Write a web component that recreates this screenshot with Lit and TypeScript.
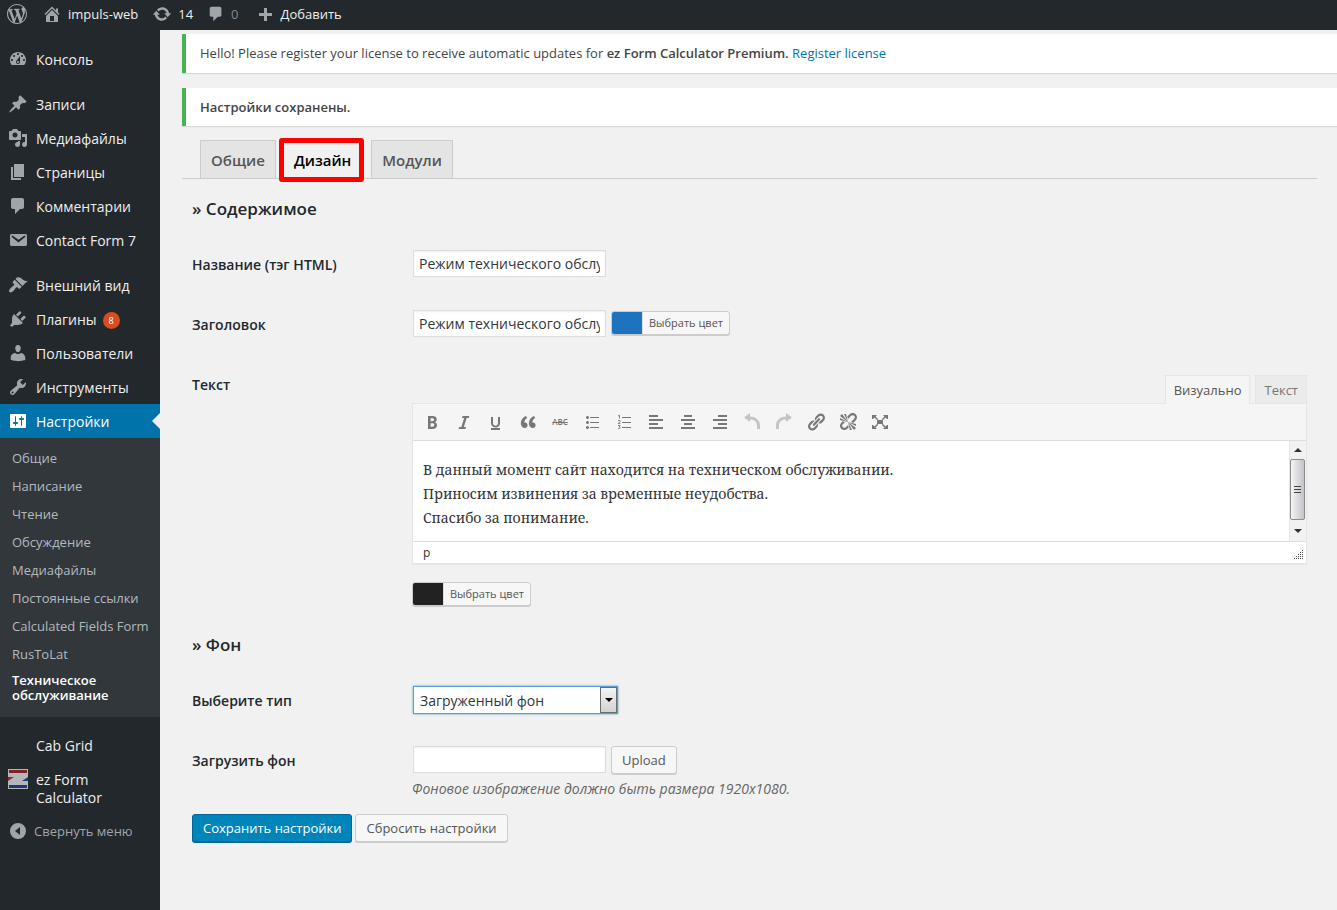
import { LitElement, html, svg, css } from "lit";
import { customElement, property, state } from "lit/decorators.js";
import { classMap } from "lit/directives/class-map.js";

/* Icon shapes on a 20 × 20 grid. */
const ICONS: Record<string, unknown> = {
  wordpress: svg`<path d="M20 10c0-5.51-4.49-10-10-10C4.48 0 0 4.49 0 10c0 5.52 4.48 10 10 10 5.51 0 10-4.48 10-10zM7.78 15.37L4.37 6.22c.55-.02 1.17-.08 1.17-.08.5-.06.44-1.13-.06-1.11 0 0-1.45.11-2.37.11-.18 0-.37 0-.58-.01C4.12 2.69 6.87 1.11 10 1.11c2.33 0 4.45.87 6.05 2.34-.68-.11-1.65.39-1.65 1.58 0 .74.45 1.36.9 2.1.35.61.55 1.36.55 2.46 0 1.49-1.4 5-1.4 5l-3.03-8.37c.54-.02.82-.17.82-.17.5-.05.44-1.25-.06-1.22 0 0-1.44.12-2.38.12-.87 0-2.33-.12-2.33-.12-.5-.03-.56 1.2-.06 1.22l.92.08 1.26 3.41zM17.41 10c.24-.64.74-1.87.43-4.25.7 1.29 1.05 2.71 1.05 4.25 0 3.29-1.73 6.24-4.4 7.78.97-2.59 1.94-5.2 2.92-7.78zM6.1 18.09C3.12 16.65 1.11 13.53 1.11 10c0-1.3.23-2.48.72-3.59C3.25 10.3 4.67 14.2 6.1 18.09zm4.03-6.63l2.58 6.98c-.86.29-1.76.45-2.71.45-.79 0-1.57-.11-2.29-.33.81-2.38 1.62-4.74 2.42-7.1z"/>`,
  home: svg`<path d="M16 8.5l1.53 1.53-1.06 1.06L10 4.6l-6.47 6.49-1.06-1.06L10 2.5l4 4v-2h2v4zm-6-2.46l6 5.99V18H4v-5.97zM12 17v-5H8v5h4z"/>`,
  update: svg`<path d="M10.2 3.28c3.53 0 6.43 2.61 6.92 6h2.08l-3.5 4-3.5-4h2.32c-.45-1.97-2.21-3.45-4.32-3.45-1.45 0-2.73.71-3.54 1.78L4.95 5.66C6.23 4.2 8.11 3.28 10.2 3.28zm-.4 13.44c-3.52 0-6.43-2.61-6.92-6H.8l3.5-4c1.17 1.33 2.33 2.67 3.5 4H5.48c.45 1.97 2.21 3.45 4.32 3.45 1.45 0 2.73-.71 3.54-1.78l1.71 1.95c-1.28 1.46-3.15 2.38-5.25 2.38z"/>`,
  plus: svg`<path d="M17 9v3h-5v5H9v-5H4V9h5V4h3v5h5z"/>`,
  dashboard: svg`<path fill-rule="evenodd" d="M3.76 16h12.48c1.1-1.37 1.76-3.11 1.76-5 0-4.42-3.58-8-8-8s-8 3.58-8 8c0 1.89.66 3.63 1.76 5zM10 4c.55 0 1 .45 1 1s-.45 1-1 1-1-.45-1-1 .45-1 1-1zM6 6c.55 0 1 .45 1 1s-.45 1-1 1-1-.45-1-1 .45-1 1-1zm8 0c.55 0 1 .45 1 1s-.45 1-1 1-1-.45-1-1 .45-1 1-1zm-5.37 5.55L12 7v6c0 1.1-.9 2-2 2s-2-.9-2-2c0-.57.24-1.08.63-1.45zM4 10c.55 0 1 .45 1 1s-.45 1-1 1-1-.45-1-1 .45-1 1-1zm12 0c.55 0 1 .45 1 1s-.45 1-1 1-1-.45-1-1 .45-1 1-1zm-5 3c0-.55-.45-1-1-1s-1 .45-1 1 .45 1 1 1 1-.45 1-1z"/>`,
  post: svg`<path d="M10.44 3.02l1.82-1.82 6.36 6.35-1.83 1.82c-1.05-.68-2.48-.57-3.41.36l-.75.75c-.92.93-1.04 2.35-.35 3.41l-1.83 1.82-2.41-2.41-2.8 2.79c-.42.42-3.38 2.71-3.8 2.29s1.86-3.39 2.28-3.81l2.79-2.79L4.1 9.36l1.83-1.82c1.05.69 2.48.57 3.4-.36l.75-.75c.93-.92 1.05-2.35.36-3.41z"/>`,
  media: svg`<path fill-rule="evenodd" d="M13 11V4c0-.55-.45-1-1-1h-1.67L9 1H5L3.67 3H2c-.55 0-1 .45-1 1v7c0 .55.45 1 1 1h10c.55 0 1-.45 1-1zM7 4.5c1.38 0 2.5 1.12 2.5 2.5S8.38 9.5 7 9.5 4.5 8.38 4.5 7 5.62 4.5 7 4.5z"/><path d="M14 6h5v10.5c0 1.38-1.12 2.5-2.5 2.5S14 17.88 14 16.5s1.12-2.5 2.5-2.5c.17 0 .34.02.5.05V9h-3V6zm-4 8.05V13h2v3.5c0 1.38-1.12 2.5-2.5 2.5S7 17.88 7 16.5 8.12 14 9.5 14c.17 0 .34.02.5.05z"/>`,
  page: svg`<path d="M6 15V2h10v13H6zm-1 1h8v2H3V5h2v11z"/>`,
  comments: svg`<path d="M5 2h9c1.1 0 2 .9 2 2v7c0 1.1-.9 2-2 2h-2l-5 5v-5H5c-1.1 0-2-.9-2-2V4c0-1.1.9-2 2-2z"/>`,
  email: svg`<path d="M3.87 4h13.25C18.37 4 19 4.59 19 5.79v8.42c0 1.19-.63 1.79-1.88 1.79H3.87c-1.25 0-1.88-.6-1.88-1.79V5.79c0-1.2.63-1.79 1.88-1.79zm6.62 8.6l6.74-5.53c.24-.2.43-.66.13-1.07-.29-.41-.82-.42-1.17-.17l-5.7 3.86L4.8 5.83c-.35-.25-.88-.24-1.17.17-.3.41-.11.87.13 1.07z"/>`,
  appearance: svg`<path d="M14.48 11.06L7.41 3.99l1.5-1.5c.5-.56 2.3-.47 3.51.32 1.21.8 1.43 1.28 2.91 2.1 1.18.64 2.45 1.26 4.45.85zm-.71.71L6.7 4.7 4.93 6.47c-.39.39-.39 1.02 0 1.41l1.06 1.06c.39.39.39 1.03 0 1.42-.6.6-1.43 1.11-2.21 1.69-.35.26-.7.53-1.01.84C1.43 14.23.4 16.08 1.4 17.07c.99 1 2.84-.03 4.18-1.36.31-.31.58-.66.85-1.02.57-.78 1.08-1.61 1.69-2.21.39-.39 1.02-.39 1.41 0l1.06 1.06c.39.39 1.02.39 1.41 0z"/>`,
  plugins: svg`<path d="M13.11 4.36L9.87 7.6 8 5.73l3.24-3.24c.35-.34 1.05-.2 1.56.32.52.51.66 1.21.31 1.55zm-8 1.77l.91-1.12 9.01 9.01-1.19.84c-.71.71-2.63 1.16-3.82 1.16H6.14L4.9 17.26c-.59.59-1.54.59-2.12 0-.59-.58-.59-1.53 0-2.12l1.24-1.24v-3.88c0-1.13.4-3.19 1.09-3.89zm7.26 3.97l3.24-3.24c.34-.35 1.04-.21 1.55.31.52.51.66 1.21.31 1.55l-3.24 3.25z"/>`,
  users: svg`<path d="M10 9.25c-2.27 0-2.73-3.44-2.73-3.44C7 4.02 7.82 2 9.97 2c2.16 0 2.98 2.02 2.71 3.81 0 0-.41 3.44-2.68 3.44z"/><path d="M7.300 10C8.500 11.300 11.500 11.300 12.720 10c2.390 0 4.520 2.330 4.520 4.530v2.490s-3.650 1.130-7.240 1.130c-3.650 0-7.240-1.130-7.240-1.130v-2.490c0-2.250 1.940-4.530 4.540-4.530z"/>`,
  tools: svg`<path fill-rule="evenodd" d="M16.68 9.77c-1.34 1.34-3.3 1.67-4.95.99l-5.41 6.52c-.99.99-2.59.99-3.58 0s-.99-2.59 0-3.57l6.52-5.42c-.68-1.65-.35-3.61.99-4.95 1.28-1.28 3.12-1.62 4.72-1.06l-2.89 2.89 2.82 2.82 2.86-2.87c.53 1.58.18 3.39-1.08 4.65zM3.81 16.21c.4.39 1.04.39 1.43 0 .4-.4.4-1.04 0-1.43-.39-.4-1.03-.4-1.43 0-.39.39-.39 1.03 0 1.43z"/>`,
  settings: svg`<path fill-rule="evenodd" d="M18 16V4c0-.55-.45-1-1-1H3c-.55 0-1 .45-1 1v12c0 .55.45 1 1 1h14c.55 0 1-.45 1-1zM8 11h1c.55 0 1 .45 1 1s-.45 1-1 1H8v1.5c0 .28-.22.5-.5.5s-.5-.22-.5-.5V13H6c-.55 0-1-.45-1-1s.45-1 1-1h1V5.5c0-.28.22-.5.5-.5s.5.22.5.5V11zm5-2h-1c-.55 0-1-.45-1-1s.45-1 1-1h1V5.500c0-.28.22-.5.5-.5s.5.22.5.5V7h1c.55 0 1 .45 1 1s-.45 1-1 1h-1v5.5c0 .28-.22.5-.5.5s-.5-.22-.5-.5V9z"/>`,
  ez: svg`<rect width="20" height="20" fill="#b4b6b8"/><rect x="1" y="1" width="18" height="3" fill="#7d2226"/><rect x="1" y="16" width="18" height="3" fill="#1f3a7c"/><path d="M0 8h6l-6 4z" fill="#8d2b30"/><path d="M20 8v4h-6z" fill="#1f3a7c"/>`,
  collapse: svg`<path fill-rule="evenodd" d="M10 2a8 8 0 1 1 0 16 8 8 0 0 1 0-16zm2 4l-5 4 5 4z"/>`,
  bold: svg`<path fill-rule="evenodd" d="M6 4v13h4.54c1.37 0 2.46-.33 3.26-1 .8-.66 1.2-1.58 1.2-2.77 0-.84-.17-1.51-.51-2.01s-.9-.85-1.67-1.03v-.09c.57-.1 1.02-.4 1.36-.9s.51-1.13.51-1.91c0-1.14-.39-1.98-1.17-2.5C12.75 4.26 11.5 4 9.78 4H6zm2.57 5.15V6.26h1.36c.73 0 1.27.11 1.61.32.34.22.51.58.51 1.07 0 .54-.16.92-.47 1.15s-.82.35-1.51.35h-1.5zm0 2.19h1.6c1.44 0 2.16.53 2.16 1.61 0 .6-.17 1.05-.51 1.34s-.86.43-1.57.43H8.57v-3.38z"/>`,
  italic: svg`<path d="M14.78 6h-2.13l-2.8 9h2.12l-.62 2H4.6l.62-2h2.14l2.8-9H8.03l.62-2h6.75z"/>`,
  underline: svg`<path d="M14 5h-2v5.71c0 1.99-1.12 2.98-2.45 2.98-1.32 0-2.55-1-2.55-2.96V5H5v5.87c0 1.91 1 4.54 4.48 4.54 3.49 0 4.52-2.58 4.52-4.5V5zm0 13v-2H5v2h9z"/>`,
  quote: svg`<path d="M9.49 13.22c0-.74-.2-1.38-.61-1.9-.62-.78-1.83-.88-2.53-.72-.29-1.65 1.11-3.75 2.92-4.65L7.88 4c-2.73 1.3-5.42 4.28-4.96 8.05C3.21 14.43 4.59 16 6.54 16c.85 0 1.56-.25 2.12-.75s.83-1.18.83-2.03zm8.05 0c0-.74-.2-1.38-.61-1.9-.63-.78-1.83-.88-2.53-.72-.29-1.65 1.11-3.75 2.92-4.65L15.93 4c-2.73 1.3-5.41 4.28-4.95 8.05.29 2.38 1.66 3.95 3.61 3.95.85 0 1.56-.25 2.12-.75s.83-1.18.83-2.03z"/>`,
  ul: svg`<path d="M5.5 7C4.67 7 4 6.33 4 5.5 4 4.68 4.67 4 5.5 4 6.32 4 7 4.68 7 5.5 7 6.33 6.32 7 5.5 7zM8 5h9v1H8V5zm-2.5 7c-.83 0-1.5-.67-1.5-1.5C4 9.68 4.67 9 5.5 9c.82 0 1.5.68 1.5 1.5 0 .83-.68 1.5-1.5 1.5zM8 10h9v1H8v-1zm-2.5 7c-.83 0-1.5-.67-1.5-1.5 0-.82.67-1.5 1.5-1.5.82 0 1.5.68 1.5 1.5 0 .83-.68 1.5-1.5 1.5zM8 15h9v1H8v-1z"/>`,
  ol: svg`<path d="M8 5h9v1H8zM8 10h9v1H8zM8 15h9v1H8z"/><path fill="none" stroke="currentColor" stroke-width=".9" d="M4 4l1.500-.8v3.300M4 8.500h2v1.200L4.200 11.500H6.400M4 13.500h2.200L5 15c1.800 0 1.500 2-.9 1.700"/>`,
  left: svg`<path d="M12 5V3H3v2h9zm5 4V7H3v2h14zm-5 4v-2H3v2h9zm5 4v-2H3v2h14z"/>`,
  center: svg`<path d="M14 5V3H6v2h8zm3 4V7H3v2h14zm-3 4v-2H6v2h8zm3 4v-2H3v2h14z"/>`,
  right: svg`<path d="M17 5V3H8v2h9zm0 4V7H3v2h14zm0 4v-2H8v2h9zm0 4v-2H3v2h14z"/>`,
  undo: svg`<path d="M8 1v3.500c6 0 10 4 10 9V17h-3v-3.500c0-3.500-2.500-6-7-6V10L2 5.500z"/>`,
  redo: svg`<path d="M12 1v3.500c-6 0-10 4-10 9V17h3v-3.500c0-3.500 2.500-6 7-6V10l6-4.500z"/>`,
  link: svg`<path d="M17.74 2.76c1.68 1.69 1.68 4.41 0 6.1l-1.53 1.52c-1.12 1.12-2.7 1.47-4.14 1.09l2.62-2.61.76-.77.76-.76c.84-.84.84-2.2 0-3.04-.84-.85-2.2-.85-3.04 0l-.77.76-3.38 3.38c-.37-1.44-.02-3.02 1.1-4.14l1.52-1.53c1.69-1.68 4.42-1.68 6.1 0zM8.59 13.43l5.34-5.34c.42-.42.42-1.1 0-1.52-.44-.43-1.13-.39-1.53 0l-5.33 5.34c-.42.42-.42 1.1 0 1.52.44.43 1.13.39 1.52 0zm-.76 2.29l4.14-4.15c.38 1.44.03 3.02-1.09 4.14l-1.52 1.53c-1.69 1.68-4.41 1.68-6.1 0-1.68-1.68-1.68-4.42 0-6.1l1.53-1.52c1.12-1.12 2.7-1.47 4.14-1.1l-4.14 4.15c-.85.84-.85 2.2 0 3.05.84.84 2.2.84 3.04 0z"/>`,
  unlink: svg`<path d="M17.74 2.26c1.68 1.69 1.68 4.41 0 6.1l-1.53 1.52c-.32.33-.69.58-1.08.77L13 10l1.69-1.64.76-.77.76-.76c.84-.84.84-2.2 0-3.04-.84-.85-2.2-.85-3.04 0l-.77.76-.76.76L10 7l-.65-2.14c.19-.38.44-.75.77-1.07l1.52-1.53c1.69-1.68 4.42-1.68 6.1 0zM2 4l8 6-6-8zm4-2l4 8-2-8H6zM2 6l8 4-8-2V6zm7.36 7.69L10 13l.74 2.35-1.38 1.39c-1.69 1.68-4.41 1.68-6.1 0-1.68-1.68-1.68-4.42 0-6.1l1.39-1.38L7 10l-.69.64-1.52 1.53c-.85.84-.85 2.2 0 3.04.84.85 2.2.85 3.04 0zM18 16l-8-6 6 8zm-4 2l-4-8 2 8h2zm4-4l-8-4 8 2v2z"/>`,
  expand: svg`<path d="M7 8h6v4H7zM2 3h5L5.500 4.500l2.700 2.700-1 1L4.500 5.500 3 7H2zM18 3v4h-1l-1.500-1.500-2.700 2.700-1-1 2.700-2.700L13 3zM2 17v-4h1l1.500 1.500 2.700-2.700 1 1-2.700 2.700L7 17zM18 17h-5l1.500-1.500-2.700-2.700 1-1 2.700 2.700L17 13h1z"/>`,
};

@customElement("wp-icon")
class WpIcon extends LitElement {
  @property() name = "";
  static styles = css`
    :host { display: block; flex: none; width: 20px; height: 20px; }
    svg { display: block; width: 100%; height: 100%; fill: currentColor; }
  `;
  render() {
    return html`<svg viewBox="0 0 20 20" aria-hidden="true">${ICONS[this.name]}</svg>`;
  }
}

@customElement("admin-bar")
class AdminBar extends LitElement {
  static styles = css`
    :host { display: block; background: #23282d; }
    .bar { display: flex; align-items: center; height: 28px; padding: 0 0 2px 7px; }
    a { display: flex; align-items: center; gap: 6px; margin-right: 14px; color: #eee; text-decoration: none; font-size: 13px; line-height: 28px; }
    a:first-child { margin-right: 15px; }
    wp-icon { color: #a0a5aa; }
    .dim { color: #82878c; margin-right: 16px; }
    .dim wp-icon { width: 18px; height: 18px; }
  `;
  render() {
    return html`<nav class="bar">
      <a href="#" aria-label="WordPress"><wp-icon name="wordpress"></wp-icon></a>
      <a href="#"><wp-icon name="home"></wp-icon>impuls-web</a>
      <a href="#"><wp-icon name="update"></wp-icon>14</a>
      <a href="#" class="dim"><wp-icon name="comments"></wp-icon>0</a>
      <a href="#"><wp-icon name="plus"></wp-icon>Добавить</a>
    </nav>`;
  }
}

type Item = { icon?: string; text: string; gap?: boolean; badge?: number; sub?: string[] };

const MENU: Item[] = [
  { icon: "dashboard", text: "Консоль" },
  { icon: "post", text: "Записи", gap: true },
  { icon: "media", text: "Медиафайлы" },
  { icon: "page", text: "Страницы" },
  { icon: "comments", text: "Комментарии" },
  { icon: "email", text: "Contact Form 7" },
  { icon: "appearance", text: "Внешний вид", gap: true },
  { icon: "plugins", text: "Плагины", badge: 8 },
  { icon: "users", text: "Пользователи" },
  { icon: "tools", text: "Инструменты" },
  {
    icon: "settings",
    text: "Настройки",
    sub: [
      "Общие", "Написание", "Чтение", "Обсуждение", "Медиафайлы", "Постоянные ссылки",
      "Calculated Fields Form", "RusToLat", "Техническое обслуживание",
    ],
  },
  { text: "Cab Grid", gap: true },
  { icon: "ez", text: "ez Form Calculator" },
];

@customElement("admin-menu")
class AdminMenu extends LitElement {
  static styles = css`
    :host { display: block; flex: none; width: 160px; background: #23282d; }
    ul { list-style: none; margin: 0; padding: 0; }
    .menu { padding-top: 12px; }
    .gap { margin-top: 11px; }
    a, button { display: flex; gap: 8px; padding: 9px 20px 7px 8px; color: #eee; text-decoration: none; font-size: 14px; line-height: 18px; }
    wp-icon { color: #a0a5aa; margin: -2px 0 0; }
    .blank { flex: none; width: 20px; }
    .badge { align-self: center; min-width: 17px; height: 17px; margin-left: -2px; border-radius: 9px; background: #d54e21; color: #fff; font-size: 9px; line-height: 17px; text-align: center; }
    .current { position: relative; background: #0073aa; color: #fff; }
    .current wp-icon { color: #fff; }
    .current::after { content: ""; position: absolute; right: 0; top: 50%; margin-top: -8px; border: 8px solid transparent; border-right-color: #f1f1f1; border-left-width: 0; }
    .sub { background: #32373c; padding: 6px 0 9px; }
    .sub a { padding: 5px 12px; color: #b4b9be; font-size: 13px; line-height: 18px; white-space: nowrap; }
    .sub li:last-child a { color: #fff; font-weight: 600; line-height: 15px; white-space: normal; }
    button { align-items: center; width: 100%; padding: 8px; border: 0; background: none; color: #a0a5aa; font-family: inherit; font-size: 13px; text-align: left; gap: 6px; }
    button wp-icon { margin: -1px 0; }
  `;
  render() {
    return html`<nav>
      <ul class="menu">
        ${MENU.map(
          (m) => html`<li class=${classMap({ gap: !!m.gap })}>
            <a href="#" class=${classMap({ current: !!m.sub })}>
              ${m.icon ? html`<wp-icon name=${m.icon}></wp-icon>` : html`<span class="blank"></span>`}
              <span>${m.text}</span>
              ${m.badge ? html`<span class="badge">${m.badge}</span>` : ""}
            </a>
            ${m.sub ? html`<ul class="sub">${m.sub.map((s) => html`<li><a href="#">${s}</a></li>`)}</ul>` : ""}
          </li>`
        )}
      </ul>
      <button type="button"><wp-icon name="collapse"></wp-icon>Свернуть меню</button>
    </nav>`;
  }
}

@customElement("color-button")
class ColorButton extends LitElement {
  @property() color = "#000";
  static styles = css`
    :host { display: flex; }
    button { display: flex; height: 24px; padding: 0; border: 1px solid #ccc; border-radius: 3px; background: #f7f7f7; box-shadow: 0 1px 0 #ccc; color: #555; font-family: inherit; font-size: 11px; line-height: 22px; overflow: hidden; }
    .swatch { width: 30px; }
    .text { padding: 0 6px; border-left: 1px solid #ddd; }
  `;
  render() {
    return html`<button type="button"><span class="swatch" style="background:${this.color}"></span><span class="text">Выбрать цвет</span></button>`;
  }
}

const TOOLS: [string, string][] = [
  ["bold", "Жирный"], ["italic", "Курсив"], ["underline", "Подчёркнутый"], ["quote", "Цитата"],
  ["strike", "Зачёркнутый"], ["ul", "Маркированный список"], ["ol", "Нумерованный список"],
  ["left", "По левому краю"], ["center", "По центру"], ["right", "По правому краю"],
  ["undo", "Отменить"], ["redo", "Повторить"], ["link", "Вставить ссылку"],
  ["unlink", "Удалить ссылку"], ["expand", "Полноэкранный режим"],
];

@customElement("text-editor")
class TextEditor extends LitElement {
  static styles = css`
    :host { display: block; }
    button { font-family: inherit; padding: 0; border: 0; background: none; }
    .tabs { display: flex; justify-content: flex-end; gap: 5px; }
    .tabs button { height: 28px; padding: 0 8px; border: 1px solid #e5e5e5; border-bottom: 0; background: #ebebeb; color: #777; font-size: 13px; line-height: 26px; }
    .tabs .on { height: 29px; margin-bottom: -1px; background: #f5f5f5; color: #555; position: relative; }
    .box { border: 1px solid #e5e5e5; box-shadow: 0 1px 1px rgba(0, 0, 0, 0.04); background: #fff; }
    .tools { display: flex; gap: 12px; padding: 8px 9px; background: #f5f5f5; border-bottom: 1px solid #ddd; color: #777; }
    .tools button { width: 20px; height: 20px; color: #777; }
    .tools button:disabled { color: #c4c4c4; }
    .strike { display: block; font-size: 8px; font-weight: 600; line-height: 18px; text-align: center; text-decoration: line-through; }
    .area { display: flex; height: 100px; }
    textarea { flex: 1; box-sizing: border-box; margin: 0; padding: 17px 10px 0; border: 0; outline: 0; resize: none; overflow: hidden; background: #fff; color: #333; font-family: "Noto Serif", "Liberation Serif", serif; font-size: 14px; line-height: 24px; }
    .scroll { display: flex; flex-direction: column; width: 16px; background: #f2f2f2; border-left: 1px solid #e6e6e6; }
    .thumb { display: flex; flex-direction: column; align-items: center; justify-content: center; gap: 2px; flex: 1; width: 13px; border: 1px solid #8c8c8c; border-radius: 2px; background: linear-gradient(90deg, #f5f5f5, #dcdcdf 50%, #c3c3c8); }
    .thumb i { width: 7px; height: 1px; background: #444; }
    .up, .down { display: flex; align-items: center; justify-content: center; height: 18px; }
    .down { height: 21px; }
    .up::after { content: ""; border: 4px solid transparent; border-bottom-color: #333; border-top: 0; }
    .down::after { content: ""; border: 4px solid transparent; border-top-color: #333; border-bottom: 0; }
    .path { display: flex; justify-content: space-between; align-items: flex-end; height: 21px; padding: 0 2px 0 10px; border-top: 1px solid #ddd; color: #333; font-size: 12px; line-height: 20px; }
    .grip { width: 10px; height: 10px; margin-bottom: 3px; fill: #555; }
  `;
  render() {
    return html`
      <div class="tabs">
        <button type="button" class="on">Визуально</button>
        <button type="button">Текст</button>
      </div>
      <div class="box">
        <div class="tools">
          ${TOOLS.map(
            ([n, label]) => html`<button type="button" aria-label=${label} ?disabled=${n === "undo" || n === "redo"}>
              ${n === "strike" ? html`<span class="strike">ABC</span>` : html`<wp-icon name=${n}></wp-icon>`}
            </button>`
          )}
        </div>
        <div class="area">
          <textarea aria-label="Текст" .value=${"В данный момент сайт находится на техническом обслуживании.\nПриносим извинения за временные неудобства.\nСпасибо за понимание."}></textarea>
          <div class="scroll"><span class="up"></span><span class="thumb"><i></i><i></i><i></i></span><span class="down"></span></div>
        </div>
        <div class="path">
          <span>p</span>
          <svg class="grip" viewBox="0 0 10 10" aria-hidden="true">
            ${[0, 1, 2, 3, 4].map((r) => [0, 1, 2, 3, 4].filter((c) => c + r >= 4).map((c) => svg`<rect x=${c * 2} y=${r * 2} width="1" height="1"/>`))}
          </svg>
        </div>
      </div>`;
  }
}

@customElement("app-root")
class AppRoot extends LitElement {
  @state() private tab = 1;
  static styles = css`
    :host { display: flex; flex-direction: column; min-height: 100vh; background: #f1f1f1; color: #444; font-family: "Open Sans", sans-serif; font-size: 13px; line-height: 19px; }
    .body { display: flex; flex: 1; }
    main { flex: 1; min-width: 0; padding: 4px 0 40px 22px; }
    .notice { margin-bottom: 15px; padding: 10px 14px; border-left: 4px solid #46b450; background: #fff; box-shadow: 0 1px 1px rgba(0, 0, 0, 0.1); line-height: 19px; }
    .notice + .notice { margin-bottom: 11px; padding-bottom: 9px; }
    strong { font-weight: 600; }
    .notice a { color: #0073aa; text-decoration: none; }
    .tabs { display: flex; align-items: flex-end; height: 41px; margin-right: 20px; padding-left: 18px; border-bottom: 1px solid #ccc; }
    .tabs button { height: 38px; padding: 0 10px; border: 1px solid #ccc; border-bottom: 0; background: #e4e4e4; color: #555; font-family: inherit; font-size: 15px; font-weight: 600; line-height: 24px; }
    .tabs .on { height: 44px; margin: 0 7px -4px 3px; padding: 0 8px 0 10px; border: 5px solid #f00; border-radius: 3px; background: #f1f1f1; color: #000; position: relative; }
    form { padding: 0 30px 0 10px; }
    h3 { margin: 0; color: #23282d; font-size: 17px; font-weight: 600; line-height: 24px; padding-top: 18px; }
    .second { padding-top: 27px; }
    .row { display: grid; grid-template-columns: 220px minmax(0, 1fr); margin-top: 32px; }
    h3 + .row { margin-top: 29px; }
    .row > label, .title { color: #23282d; font-size: 14px; font-weight: 600; line-height: 20px; padding-top: 5px; }
    .line { display: flex; align-items: flex-start; gap: 5px; height: 28px; }
    input { box-sizing: border-box; width: 193px; height: 27px; margin: 0 0 0 1px; padding: 2px 5px; border: 1px solid #ddd; background: #fff; box-shadow: inset 0 1px 2px rgba(0, 0, 0, 0.07); color: #32373c; font-family: inherit; font-size: 14px; outline: 0; }
    .line color-button { padding-top: 1px; }
    .editor { display: flex; flex-direction: column; gap: 18px; padding-top: 5px; }
    .select { display: flex; width: 205px; height: 28px; margin-left: 1px; box-sizing: border-box; border: 1px solid #5b9dd9; box-shadow: 0 0 2px rgba(30, 140, 190, 0.8); background: #fff; }
    select { flex: 1; min-width: 0; appearance: none; border: 0; padding: 0 6px; margin: 0; background: #fff; color: #32373c; font-family: inherit; font-size: 14px; outline: 0; }
    .arrow { display: flex; align-items: center; justify-content: center; width: 15px; border: 1px solid #6d6d6d; background: linear-gradient(#f4f4f4, #d2d2d2); }
    .arrow::after { content: ""; border: 4px solid transparent; border-top-color: #000; border-bottom: 0; }
    .button { height: 28px; padding: 0 10px; border: 1px solid #ccc; border-radius: 3px; background: #f7f7f7; box-shadow: 0 1px 0 #ccc; color: #555; font-family: inherit; font-size: 13px; line-height: 26px; }
    .primary { border-color: #006799; background: #0085ba; box-shadow: 0 1px 0 #006799; color: #fff; }
    .hint { margin: 5px 0 0; color: #666; font-size: 14px; font-style: italic; line-height: 20px; }
    .actions { display: flex; gap: 3px; margin-top: 15px; }
  `;
  render() {
    return html`
      <admin-bar></admin-bar>
      <div class="body">
        <admin-menu></admin-menu>
        <main>
          <div class="notice">Hello! Please register your license to receive automatic updates for <strong>ez Form Calculator Premium.</strong> <a href="#">Register license</a></div>
          <div class="notice"><strong>Настройки сохранены.</strong></div>
          <div class="tabs">
            ${["Общие", "Дизайн", "Модули"].map(
              (t, i) => html`<button type="button" class=${classMap({ on: this.tab === i })} @click=${() => (this.tab = i)}>${t}</button>`
            )}
          </div>
          <form @submit=${(e: Event) => e.preventDefault()}>
            <h3>» Содержимое</h3>
            <div class="row">
              <label for="title">Название (тэг HTML)</label>
              <div class="line"><input id="title" type="text" value="Режим технического обслуживания" /></div>
            </div>
            <div class="row">
              <label for="heading">Заголовок</label>
              <div class="line"><input id="heading" type="text" value="Режим технического обслуживания" /><color-button color="#1e73be"></color-button></div>
            </div>
            <div class="row">
              <div class="title">Текст</div>
              <div class="editor"><text-editor></text-editor><color-button color="#222222"></color-button></div>
            </div>
            <h3 class="second">» Фон</h3>
            <div class="row">
              <label for="type">Выберите тип</label>
              <div class="select"><select id="type"><option>Загруженный фон</option></select><span class="arrow"></span></div>
            </div>
            <div class="row">
              <label for="file">Загрузить фон</label>
              <div>
                <div class="line"><input id="file" type="text" /><button type="button" class="button">Upload</button></div>
                <p class="hint">Фоновое изображение должно быть размера 1920x1080.</p>
              </div>
            </div>
            <div class="actions">
              <button type="submit" class="button primary">Сохранить настройки</button>
              <button type="button" class="button">Сбросить настройки</button>
            </div>
          </form>
        </main>
      </div>`;
  }
}
